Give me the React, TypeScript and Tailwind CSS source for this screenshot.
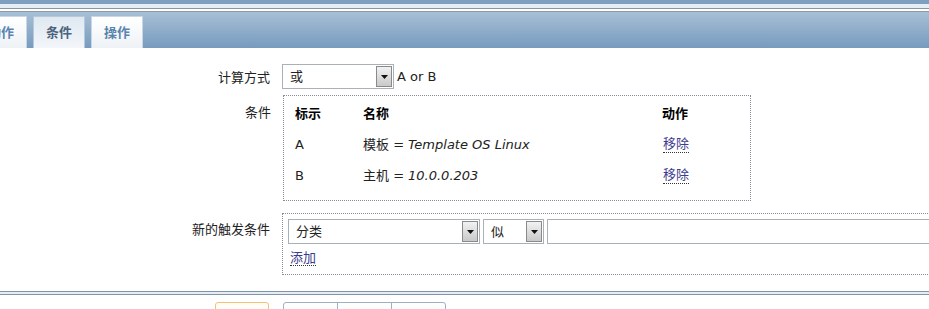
import React from 'react';

const Arrow = () => (
  <div className="flex h-full w-[16px] shrink-0 items-center justify-center border border-[#8a8a8a] bg-gradient-to-b from-[#f2f2f2] to-[#c9c9c9]">
    <svg width="7" height="4" viewBox="0 0 7 4">
      <path d="M0 0h7L3.5 4z" fill="#111" />
    </svg>
  </div>
);

const Select = ({ value, className }: { value: string; className: string }) => (
  <div className={`flex items-stretch border border-[#a9b0b6] bg-white p-[1px] ${className}`}>
    <span className="flex flex-1 items-center pl-[6px] text-[#222]">{value}</span>
    <Arrow />
  </div>
);

const Link = ({ children }: { children: React.ReactNode }) => (
  <span className="border-b border-dotted border-[#333] leading-[16px] text-[#3d3b8e]">{children}</span>
);

const Tab = ({ label, active, className = '' }: { label: string; active?: boolean; className?: string }) => (
  <div
    className={`flex h-[32px] w-[52px] items-center justify-center border border-b-0 font-bold ${
      active
        ? 'border-[#b6c8da] bg-gradient-to-b from-[#dfe8f1] to-[#f3f6fa] text-[#4a627a]'
        : 'border-[#c9d6e3] bg-gradient-to-b from-[#ffffff] to-[#eef2f6] text-[#5a84ad]'
    } ${className}`}
  >
    {label}
  </div>
);

export default function App() {
  return (
    <div className="h-[309px] w-[929px] overflow-hidden bg-white font-['DejaVu_Sans','Noto_Sans_CJK_SC',sans-serif] text-[13px] text-[#222]">
      {/* Header */}
      <div className="h-[4px] bg-[#7f9fc1]" />
      <div className="h-[4px] bg-[#e7edf5]" />
      <div className="h-px bg-[#8797a6]" />
      <div className="h-[2px] bg-white" />
      <div className="h-px bg-[#8d9ba7]" />
      <div className="flex h-[36px] items-end gap-[6px] bg-gradient-to-b from-[#a7bfd5] via-[#8fadca] to-[#779bbf]">
        <Tab label="动作" className="-ml-[25px]" />
        <Tab label="条件" active />
        <Tab label="操作" />
      </div>

      {/* Form */}
      <div className="grid grid-cols-[282px_1fr] pt-[16px]">
        <div className="flex h-[25px] items-center justify-end pr-[12px] pt-[3px]">计算方式</div>
        <div className="flex items-center gap-[3px]">
          <Select value="或" className="h-[25px] w-[112px]" />
          <span>A or B</span>
        </div>

        <div className="pr-[11px] pt-[14px] text-right">条件</div>
        <div className="pt-[6px]">
          <div className="ml-[1px] w-[468px] border border-dotted border-[#8a8a9a] pb-[9px] pl-[11px] pt-[2px]">
            <div className="grid grid-cols-[68px_299px_1fr] font-bold text-black">
              <div className="flex h-[31px] items-center">标示</div>
              <div className="flex h-[31px] items-center">名称</div>
              <div className="flex h-[31px] items-center">动作</div>
            </div>
            <div className="grid grid-cols-[68px_299px_1fr]">
              <div className="flex h-[31px] items-center">A</div>
              <div className="flex h-[31px] items-center">
                模板 = <i className="ml-[4px]">Template OS Linux</i>
              </div>
              <div className="flex h-[31px] items-center pl-[1px]">
                <Link>移除</Link>
              </div>
            </div>
            <div className="grid grid-cols-[68px_299px_1fr]">
              <div className="flex h-[31px] items-center">B</div>
              <div className="flex h-[31px] items-center">
                主机 = <i className="ml-[4px]">10.0.0.203</i>
              </div>
              <div className="flex h-[31px] items-center pl-[1px]">
                <Link>移除</Link>
              </div>
            </div>
          </div>
        </div>

        <div className="pr-[12px] pt-[19px] text-right">新的触发条件</div>
        <div className="pt-[12px]">
          <div className="w-[700px] border border-r-0 border-dotted border-[#8a8a9a] pb-[6px] pl-[5px] pt-[5px]">
            <div className="flex gap-[3px]">
              <Select value="分类" className="h-[25px] w-[192px]" />
              <Select value="似" className="h-[25px] w-[61px]" />
              <div className="h-[25px] flex-1 border border-[#a9b0b6] bg-white" />
            </div>
            <div className="pl-[2px] pt-[4px]">
              <Link>添加</Link>
            </div>
          </div>
        </div>
      </div>

      {/* Footer */}
      <div className="mt-[16px] h-px bg-[#7e95ab]" />
      <div className="h-[2px] bg-[#e6ecf2]" />
      <div className="h-px bg-[#7e95ab]" />
      <div className="flex pt-[7px]">
        <div className="ml-[215px] h-[24px] w-[54px] rounded-t-[3px] border border-[#f0c27a] bg-[#fffdf6]" />
        <div className="ml-[14px] flex h-[24px] rounded-t-[3px] border border-[#9eb0c2] bg-gradient-to-b from-[#ffffff] to-[#eef3f7]">
          <div className="w-[54px] border-r border-[#9eb0c2]" />
          <div className="w-[54px] border-r border-[#9eb0c2]" />
          <div className="w-[53px]" />
        </div>
      </div>
    </div>
  );
}
